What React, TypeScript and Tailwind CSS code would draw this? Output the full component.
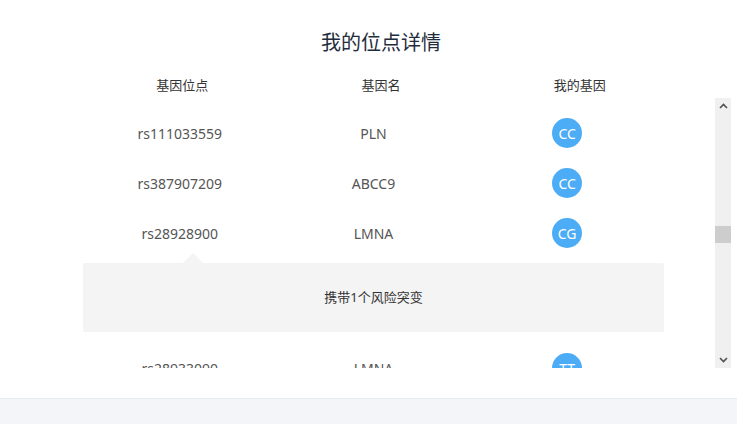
const rows = [
    {site: "rs111033559", gene: "PLN", mine: "CC"},
    {site: "rs387907209", gene: "ABCC9", mine: "CC"},
    {site: "rs28928900", gene: "LMNA", mine: "CG", detail: "携带1个风险突变"},
    {site: "rs28933090", gene: "LMNA", mine: "TT"},
];

function Row({site, gene, mine}: {site: string; gene: string; mine: string}) {
    return (
        <div className="grid grid-cols-3 h-[50px] items-center text-[14px] text-[#555]">
            <div className="text-center">{site}</div>
            <div className="text-center">{gene}</div>
            <div className="flex justify-center">
                <span className="w-[30px] h-[30px] rounded-full bg-[#4cacf6] text-white flex items-center justify-center text-[14px]">
                    {mine}
                </span>
            </div>
        </div>
    );
}

export default function App() {
    return (
        <div className="w-[737px] h-[424px] overflow-hidden bg-white" style={{fontFamily: '"Noto Sans", "Noto Sans CJK SC", sans-serif'}}>
            <div className="h-[398px] overflow-hidden">
                <div className="ml-[83px] w-[596px]">
                    <h2 className="pt-[29px] h-[67px] text-center text-[20px] leading-[28px] text-[#1f2d3d]">我的位点详情</h2>
                    <div className="grid grid-cols-3 h-[31px] pt-[6px] items-center text-[13px] text-[#333]">
                        <div className="text-center">基因位点</div>
                        <div className="text-center">基因名</div>
                        <div className="text-center">我的基因</div>
                    </div>
                </div>
                <div className="flex h-[270px]">
                    <div className="ml-[83px] w-[581px] h-[270px] overflow-hidden pt-[10px]">
                        {rows.map((r) => (
                            <div key={r.site}>
                                <Row site={r.site} gene={r.gene} mine={r.mine}/>
                                {r.detail && (
                                    <div className="relative mt-[5px] mb-[11px]">
                                        <div className="absolute left-[100px] -top-[10px] w-0 h-0 border-x-[10px] border-x-transparent border-b-[10px] border-b-[#f4f4f4]"/>
                                        <div className="h-[69px] bg-[#f4f4f4] rounded-[2px] flex items-center justify-center text-[13px] text-[#333]">
                                            {r.detail}
                                        </div>
                                    </div>
                                )}
                            </div>
                        ))}
                    </div>
                    <div className="ml-[51px] w-[16px] h-[270px] bg-[#f0f0f0] relative flex flex-col items-center justify-between py-[3px]">
                        <svg width="9" height="6" viewBox="0 0 9 6" className="mt-[2px]">
                            <path d="M1 5 L4.5 1.5 L8 5" fill="none" stroke="#505050" strokeWidth="1.6"/>
                        </svg>
                        <div className="absolute left-0 top-[128px] w-[16px] h-[17px] bg-[#cdcdcd]"/>
                        <svg width="9" height="6" viewBox="0 0 9 6" className="mb-[2px]">
                            <path d="M1 1 L4.5 4.5 L8 1" fill="none" stroke="#505050" strokeWidth="1.6"/>
                        </svg>
                    </div>
                </div>
            </div>
            <div className="h-[26px] border-t border-[#e9ecef] bg-[#f3f5f8]"/>
        </div>
    );
}
